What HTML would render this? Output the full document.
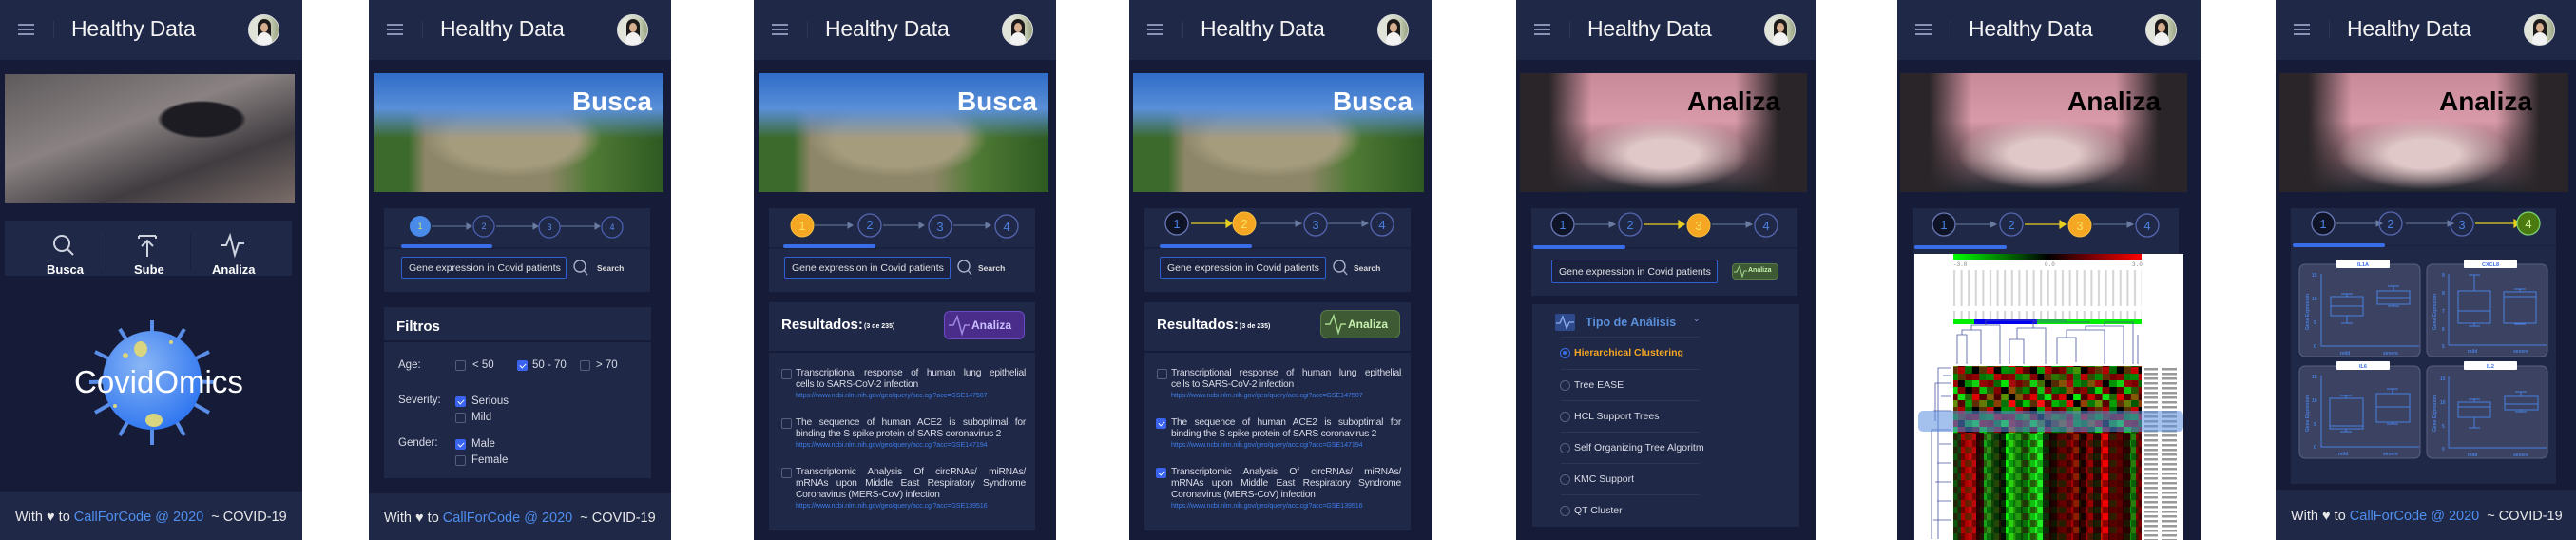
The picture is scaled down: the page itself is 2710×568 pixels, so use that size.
<!DOCTYPE html>
<html><head><meta charset="utf-8">
<style>
*{margin:0;padding:0;box-sizing:border-box}
body{width:2710px;height:568px;background:#fff;position:relative;overflow:hidden;font-family:"Liberation Sans",sans-serif;color:#fff}
.ph{position:absolute;top:0;height:568px;background:#161c38;overflow:hidden}
.a{position:absolute}
.hd{position:absolute;left:0;top:0;width:100%;height:63px;background:#1f2847}
.hb{position:absolute;left:19px;top:25px;width:17px;height:12px;border-top:2px solid #8a93b5;border-bottom:2px solid #8a93b5}
.hb:after{content:"";position:absolute;left:0;top:3px;width:17px;height:2px;background:#8a93b5}
.dv{position:absolute;left:56px;top:22px;width:1px;height:18px;background:#2c3656}
.tt{position:absolute;left:75px;top:17px;font-size:23px;color:#f2f2f2;white-space:nowrap;letter-spacing:-0.2px}
.av{position:absolute;left:261px;top:15px;width:33px;height:33px;border-radius:50%;overflow:hidden;background:linear-gradient(90deg,#dfe3d8 0 30%,#c9d0b8 70%,#9aa585 100%);border:1px solid #ddd}
.av:before{content:"";position:absolute;left:9px;top:4px;width:14px;height:22px;border-radius:7px 7px 3px 3px;background:#1c1a1a}
.av:after{content:"";position:absolute;left:12px;top:8px;width:8px;height:10px;border-radius:50%;background:#d8b090;box-shadow:0 14px 0 4px #f2f2f2}
.card{position:absolute;background:#1f2847}
.ft{position:absolute;left:0;width:100%;background:#1f2847}
.ftx{position:absolute;left:16px;font-size:14.5px;color:#e8e8e8;white-space:nowrap}
.ftx b{color:#4f8ff0;font-weight:normal}
.cb{position:absolute;width:11px;height:11px;border:1.5px solid #555e7e;border-radius:2px}
.cb.on{background:#3a63f0;border-color:#3a63f0}
.cb.on:after{content:"";position:absolute;left:3px;top:1px;width:3px;height:5px;border:solid #fff;border-width:0 1.5px 1.5px 0;transform:rotate(45deg)}
.lb{position:absolute;font-size:11.5px;color:#d8dbe6;white-space:nowrap}
.busca{background:linear-gradient(180deg,#2f6cc8 0%,#5a8fd8 30%,transparent 55%),radial-gradient(ellipse at 48% 55%,#a59c7e 0 30%,transparent 42%),linear-gradient(90deg,#3c6a2c 0 12%,#8e8668 18% 60%,#4f7a35 75%,#2e5a22 100%)}
.anal{background:radial-gradient(ellipse 30% 30% at 50% 68%,#e0c8c8 0 40%,transparent 100%),linear-gradient(90deg,#2a2528 0 10%,transparent 25% 75%,#2a2528 90%),linear-gradient(180deg,#c88a98 0%,#d89aa8 40%,#7a5a62 72%,#20262e 100%)}
.hero1{background:radial-gradient(ellipse at 68% 35%,#1c1c22 0 14%,transparent 16%),linear-gradient(160deg,#5e5a5c 0%,#8a8282 40%,#403c40 70%,#7a6c68 100%)}
.htxt{position:absolute;right:12px;top:14px;font-size:28px;font-weight:bold}
.inp{position:absolute;height:23px;border:1.5px solid #2f5fd0;background:#1a2240;font-size:10.5px;color:#e0e0e0;padding:5px 0 0 7px;white-space:nowrap;overflow:hidden;border-radius:2px}
.it{position:absolute;width:242px;font-size:10.3px;line-height:12px;color:#d8dbe6;letter-spacing:-0.25px}
.it div{white-space:nowrap;text-align:justify;text-align-last:justify}
.it .u{color:#3d7ce8;font-size:7.2px;letter-spacing:-0.1px;line-height:10px}
.it .l{text-align-last:left}
.rd{position:absolute;left:46px;width:11px;height:11px;border:1.5px solid #59617f;border-radius:50%}
.op{position:absolute;left:61px;font-size:10.5px;color:#d8dbe6;white-space:nowrap}
.sp{position:absolute;left:47px;width:146px;height:1px;background:#2c3656}
</style></head><body>

<!-- PHONE 1 -->
<div class="ph" style="left:0;width:318px">
 <div class="hd"></div><div class="hb"></div><div class="dv"></div><div class="tt">Healthy Data</div><div class="av"></div>
 <div class="a hero1" style="left:5px;top:78px;width:305px;height:136px"></div>
 <div class="card" style="left:5px;top:232px;width:302px;height:58px"></div>
 <div class="a" style="left:111px;top:245px;width:1px;height:40px;background:#192140"></div>
 <div class="a" style="left:200px;top:245px;width:1px;height:40px;background:#192140"></div>
 <svg class="a" style="left:0;top:240px" width="318" height="40" fill="none" stroke="#cfd3e0" stroke-width="2">
  <circle cx="65" cy="16" r="8"/><line x1="71" y1="22" x2="77" y2="28"/>
  <line x1="146" y1="8" x2="164" y2="8"/><line x1="146" y1="8" x2="146" y2="11"/><line x1="164" y1="8" x2="164" y2="11"/>
  <line x1="155" y1="13" x2="155" y2="30"/><polyline points="149,19 155,13 161,19"/>
  <polyline points="232,18 238,18 242,8 247,28 251,16 257,16"/>
 </svg>
 <div class="a" style="left:49px;top:276px;font-size:13px;font-weight:bold">Busca</div>
 <div class="a" style="left:141px;top:276px;font-size:13px;font-weight:bold">Sube</div>
 <div class="a" style="left:223px;top:276px;font-size:13px;font-weight:bold">Analiza</div>
 <svg class="a" style="left:60px;top:330px" width="200" height="145">
  <defs><radialGradient id="vg" cx="40%" cy="35%" r="70%"><stop offset="0" stop-color="#8ab6f5"/><stop offset="1" stop-color="#2c74f0"/></radialGradient></defs>
  <g stroke="#5a8de8" stroke-width="4" fill="none">
   <line x1="100" y1="70" x2="100" y2="7"/><line x1="100" y1="70" x2="100" y2="138"/>
   <line x1="100" y1="70" x2="40" y2="40"/><line x1="100" y1="70" x2="160" y2="40"/>
   <line x1="100" y1="70" x2="40" y2="104"/><line x1="100" y1="70" x2="160" y2="104"/>
   <line x1="100" y1="70" x2="66" y2="16"/><line x1="100" y1="70" x2="134" y2="16"/>
   <line x1="100" y1="70" x2="66" y2="128"/><line x1="100" y1="70" x2="134" y2="128"/>
   <line x1="100" y1="70" x2="34" y2="72"/><line x1="100" y1="70" x2="166" y2="72"/>
  </g>
  <circle cx="100" cy="70" r="52" fill="url(#vg)"/>
  <ellipse cx="88" cy="37" rx="7" ry="8" fill="#d8d480"/><ellipse cx="102" cy="112" rx="9" ry="7" fill="#d8d480"/>
  <circle cx="72" cy="44" r="3" fill="#d8d480"/><circle cx="120" cy="30" r="2" fill="#d8d480"/><circle cx="61" cy="97" r="2" fill="#d8d480"/>
 </svg>
 <div class="a" style="left:78px;top:383px;font-size:33px;color:#fff">CovidOmics</div>
 <div class="ft" style="top:517px;height:51px"></div>
 <div class="ftx" style="top:536px">With ♥ to <b>CallForCode @ 2020</b> &nbsp;~ COVID-19</div>
</div>

<!-- PHONE 2 -->
<div class="ph" style="left:388px;width:318px">
 <div class="hd"></div><div class="hb"></div><div class="dv"></div><div class="tt">Healthy Data</div><div class="av"></div>
 <div class="a busca" style="left:5px;top:77px;width:305px;height:125px"><div class="htxt">Busca</div></div>
 <div class="card" style="left:16px;top:219px;width:280px;height:88px"></div>
 <div class="a" style="left:16px;top:260px;width:280px;height:2px;background:#192140"></div>
 <svg class="a" style="left:0;top:226px" width="318" height="26">
  <g stroke="#6a7ba0" stroke-width="1" fill="#6a7ba0">
   <line x1="66" y1="12" x2="103" y2="12"/><polygon points="103,9 108,12 103,15"/>
   <line x1="134" y1="12" x2="173" y2="12"/><polygon points="173,9 178,12 173,15"/>
   <line x1="201" y1="12" x2="238" y2="12"/><polygon points="238,9 243,12 238,15"/>
  </g>
  <circle cx="54" cy="12" r="11" fill="#4a8ae8"/>
  <g fill="none" stroke="#4a5fb0" stroke-width="1.3"><circle cx="121" cy="12" r="11"/><circle cx="190" cy="13" r="11"/><circle cx="256" cy="13" r="11"/></g>
  <g font-size="9" text-anchor="middle" fill="#5a8ae8"><text x="54" y="15" fill="#c8e070">1</text><text x="121" y="15">2</text><text x="190" y="16">3</text><text x="256" y="16">4</text></g>
 </svg>
 <div class="a" style="left:34px;top:257px;width:96px;height:4px;background:#3a6ee8;border-radius:2px"></div>
 <div class="inp" style="left:34px;top:270px;width:174px">Gene expression in Covid patients</div>
 <svg class="a" style="left:214px;top:272px" width="20" height="20" fill="none" stroke="#aab0c8" stroke-width="1.4"><circle cx="8" cy="8" r="6"/><line x1="12" y1="12" x2="16" y2="17"/></svg>
 <div class="a" style="left:240px;top:277px;font-size:8.5px;font-weight:bold;color:#ddd">Search</div>
 <div class="card" style="left:16px;top:323px;width:281px;height:35px"></div>
 <div class="a" style="left:29px;top:335px;font-size:15px;font-weight:bold">Filtros</div>
 <div class="card" style="left:16px;top:360px;width:281px;height:143px"></div>
 <div class="lb" style="left:31px;top:378px">Age:</div>
 <div class="cb" style="left:91px;top:379px"></div><div class="lb" style="left:109px;top:378px">&lt; 50</div>
 <div class="cb on" style="left:156px;top:379px"></div><div class="lb" style="left:172px;top:378px">50 - 70</div>
 <div class="cb" style="left:222px;top:379px"></div><div class="lb" style="left:239px;top:378px">&gt; 70</div>
 <div class="lb" style="left:31px;top:415px">Severity:</div>
 <div class="cb on" style="left:91px;top:417px"></div><div class="lb" style="left:108px;top:416px">Serious</div>
 <div class="cb" style="left:91px;top:434px"></div><div class="lb" style="left:108px;top:433px">Mild</div>
 <div class="lb" style="left:31px;top:460px">Gender:</div>
 <div class="cb on" style="left:91px;top:462px"></div><div class="lb" style="left:108px;top:461px">Male</div>
 <div class="cb" style="left:91px;top:479px"></div><div class="lb" style="left:108px;top:478px">Female</div>
 <div class="ft" style="top:519px;height:49px"></div>
 <div class="ftx" style="top:537px">With ♥ to <b>CallForCode @ 2020</b> &nbsp;~ COVID-19</div>
</div>

<!-- PHONE 3 -->
<div class="ph" style="left:793px;width:318px">
 <div class="hd"></div><div class="hb"></div><div class="dv"></div><div class="tt">Healthy Data</div><div class="av"></div>
 <div class="a busca" style="left:5px;top:77px;width:305px;height:125px"><div class="htxt">Busca</div></div>
 <div class="card" style="left:16px;top:219px;width:280px;height:88px"></div>
 <div class="a" style="left:16px;top:260px;width:280px;height:2px;background:#192140"></div>
 <svg class="a" style="left:0;top:222px" width="318" height="30">
  <g stroke="#6a7ba0" stroke-width="1" fill="#6a7ba0">
   <line x1="64" y1="15" x2="99" y2="15"/><polygon points="99,12 104,15 99,18"/>
   <line x1="136" y1="15" x2="174" y2="15"/><polygon points="174,12 179,15 174,18"/>
   <line x1="210" y1="15" x2="244" y2="15"/><polygon points="244,12 249,15 244,18"/>
  </g>
  <circle cx="51" cy="15" r="12" fill="#f5a623" stroke="#f7c040"/>
  <g fill="none" stroke="#5566b0" stroke-width="1.3"><circle cx="122" cy="15" r="12"/><circle cx="196" cy="16" r="12"/><circle cx="266" cy="16" r="12"/></g>
  <g font-size="13" text-anchor="middle" fill="#4a80e0"><text x="51" y="20" fill="#f8e060">1</text><text x="122" y="19">2</text><text x="196" y="21">3</text><text x="266" y="21">4</text></g>
 </svg>
 <div class="a" style="left:31px;top:257px;width:97px;height:4px;background:#3a6ee8;border-radius:2px"></div>
 <div class="inp" style="left:32px;top:270px;width:175px">Gene expression in Covid patients</div>
 <svg class="a" style="left:213px;top:272px" width="20" height="20" fill="none" stroke="#aab0c8" stroke-width="1.4"><circle cx="8" cy="8" r="6"/><line x1="12" y1="12" x2="16" y2="17"/></svg>
 <div class="a" style="left:236px;top:277px;font-size:8.5px;font-weight:bold;color:#ddd">Search</div>
 <div class="card" style="left:16px;top:318px;width:280px;height:51px"></div>
 <div class="a" style="left:29px;top:333px;font-size:15px;font-weight:bold">Resultados:</div>
 <div class="a" style="left:116px;top:340px;font-size:7px;font-weight:bold">(3 de 235)</div>
 <div class="a" style="left:200px;top:327px;width:85px;height:30px;background:#4a2d8a;border:1.5px solid #6b4bc4;border-radius:6px"></div>
 <svg class="a" style="left:204px;top:330px" width="24" height="24" fill="none" stroke="#a08ae0" stroke-width="1.5"><polyline points="1,12 6,12 10,3 15,21 18,12 23,12"/></svg>
 <div class="a" style="left:229px;top:335px;font-size:12px;font-weight:bold;color:#c8c0ff">Analiza</div>
 <div class="card" style="left:16px;top:371px;width:280px;height:187px"></div>
 <div class="cb" style="left:29px;top:388px"></div>
 <div class="it" style="left:44px;top:387px"><div>Transcriptional response of human lung epithelial</div><div class="l">cells to SARS-CoV-2 infection</div><div class="u l">https://www.ncbi.nlm.nih.gov/geo/query/acc.cgi?acc=GSE147507</div></div>
 <div class="cb" style="left:29px;top:440px"></div>
 <div class="it" style="left:44px;top:439px"><div>The sequence of human ACE2 is suboptimal for</div><div class="l">binding the S spike protein of SARS coronavirus 2</div><div class="u l">https://www.ncbi.nlm.nih.gov/geo/query/acc.cgi?acc=GSE147194</div></div>
 <div class="cb" style="left:29px;top:492px"></div>
 <div class="it" style="left:44px;top:491px"><div>Transcriptomic Analysis Of circRNAs/ miRNAs/</div><div>mRNAs upon Middle East Respiratory Syndrome</div><div class="l">Coronavirus (MERS-CoV) infection</div><div class="u l">https://www.ncbi.nlm.nih.gov/geo/query/acc.cgi?acc=GSE139516</div></div>
</div>

<!-- PHONE 4 -->
<div class="ph" style="left:1188px;width:319px">
 <div class="hd"></div><div class="hb"></div><div class="dv"></div><div class="tt">Healthy Data</div><div class="av"></div>
 <div class="a busca" style="left:4px;top:77px;width:306px;height:125px"><div class="htxt">Busca</div></div>
 <div class="card" style="left:16px;top:219px;width:280px;height:88px"></div>
 <div class="a" style="left:16px;top:260px;width:280px;height:2px;background:#192140"></div>
 <svg class="a" style="left:0;top:222px" width="319" height="30">
  <g stroke="#6a7ba0" stroke-width="1" fill="#6a7ba0">
   <line x1="138" y1="13" x2="175" y2="13"/><polygon points="175,10 181,13 175,16"/>
   <line x1="209" y1="13" x2="245" y2="13"/><polygon points="245,10 251,13 245,16"/>
  </g>
  <g stroke="#e8d020" stroke-width="1.2" fill="#e8d020"><line x1="65" y1="13" x2="102" y2="13"/><polygon points="102,9 108,13 102,17"/></g>
  <circle cx="50" cy="13" r="12" fill="#0e1326" stroke="#6a78b8" stroke-width="1.3"/>
  <circle cx="121" cy="13" r="12" fill="#f5a623" stroke="#f7c040"/>
  <g fill="none" stroke="#5566b0" stroke-width="1.3"><circle cx="196" cy="14" r="12"/><circle cx="266" cy="14" r="12"/></g>
  <g font-size="13" text-anchor="middle" fill="#4a80e0"><text x="50" y="18">1</text><text x="121" y="18" fill="#f8e060">2</text><text x="196" y="19">3</text><text x="266" y="19">4</text></g>
 </svg>
 <div class="a" style="left:32px;top:257px;width:97px;height:4px;background:#3a6ee8;border-radius:2px"></div>
 <div class="inp" style="left:32px;top:270px;width:175px">Gene expression in Covid patients</div>
 <svg class="a" style="left:213px;top:272px" width="20" height="20" fill="none" stroke="#aab0c8" stroke-width="1.4"><circle cx="8" cy="8" r="6"/><line x1="12" y1="12" x2="16" y2="17"/></svg>
 <div class="a" style="left:236px;top:277px;font-size:8.5px;font-weight:bold;color:#ddd">Search</div>
 <div class="card" style="left:16px;top:318px;width:280px;height:51px"></div>
 <div class="a" style="left:29px;top:333px;font-size:15px;font-weight:bold">Resultados:</div>
 <div class="a" style="left:116px;top:340px;font-size:7px;font-weight:bold">(3 de 235)</div>
 <div class="a" style="left:201px;top:326px;width:84px;height:30px;background:#3d5a35;border:1.5px solid #5a7a4a;border-radius:7px"></div>
 <svg class="a" style="left:205px;top:329px" width="24" height="24" fill="none" stroke="#a8d890" stroke-width="1.5"><polyline points="1,12 6,12 10,3 15,21 18,12 23,12"/></svg>
 <div class="a" style="left:230px;top:334px;font-size:12px;font-weight:bold;color:#c8f0b0">Analiza</div>
 <div class="card" style="left:16px;top:371px;width:280px;height:187px"></div>
 <div class="cb" style="left:29px;top:388px"></div>
 <div class="it" style="left:44px;top:387px"><div>Transcriptional response of human lung epithelial</div><div class="l">cells to SARS-CoV-2 infection</div><div class="u l">https://www.ncbi.nlm.nih.gov/geo/query/acc.cgi?acc=GSE147507</div></div>
 <div class="cb on" style="left:28px;top:440px"></div>
 <div class="it" style="left:44px;top:439px"><div>The sequence of human ACE2 is suboptimal for</div><div class="l">binding the S spike protein of SARS coronavirus 2</div><div class="u l">https://www.ncbi.nlm.nih.gov/geo/query/acc.cgi?acc=GSE147194</div></div>
 <div class="cb on" style="left:28px;top:492px"></div>
 <div class="it" style="left:44px;top:491px"><div>Transcriptomic Analysis Of circRNAs/ miRNAs/</div><div>mRNAs upon Middle East Respiratory Syndrome</div><div class="l">Coronavirus (MERS-CoV) infection</div><div class="u l">https://www.ncbi.nlm.nih.gov/geo/query/acc.cgi?acc=GSE139516</div></div>
</div>

<!-- PHONE 5 -->
<div class="ph" style="left:1595px;width:315px">
 <div class="hd"></div><div class="hb"></div><div class="dv"></div><div class="tt">Healthy Data</div><div class="av"></div>
 <div class="a anal" style="left:4px;top:77px;width:302px;height:125px"><div class="htxt" style="color:#000;right:28px">Analiza</div></div>
 <div class="card" style="left:16px;top:219px;width:280px;height:92px"></div>
 <div class="a" style="left:16px;top:260px;width:280px;height:2px;background:#192140"></div>
 <svg class="a" style="left:0;top:222px" width="315" height="30">
  <g stroke="#6a7ba0" stroke-width="1" fill="#6a7ba0">
   <line x1="62" y1="14" x2="98" y2="14"/><polygon points="98,11 104,14 98,17"/>
   <line x1="206" y1="14" x2="242" y2="14"/><polygon points="242,11 248,14 242,17"/>
  </g>
  <g stroke="#e8d020" stroke-width="1.2" fill="#e8d020"><line x1="134" y1="14" x2="171" y2="14"/><polygon points="171,10 177,14 171,18"/></g>
  <circle cx="49" cy="14" r="12" fill="#0e1326" stroke="#6a78b8" stroke-width="1.3"/>
  <circle cx="120" cy="14" r="12" fill="none" stroke="#5566b0" stroke-width="1.3"/>
  <circle cx="192" cy="15" r="12" fill="#f5a623" stroke="#f7c040"/>
  <circle cx="263" cy="15" r="12" fill="none" stroke="#5566b0" stroke-width="1.3"/>
  <g font-size="13" text-anchor="middle" fill="#4a80e0"><text x="49" y="19">1</text><text x="120" y="19">2</text><text x="192" y="20" fill="#f8e060">3</text><text x="263" y="20">4</text></g>
 </svg>
 <div class="a" style="left:18px;top:258px;width:97px;height:4px;background:#3a6ee8;border-radius:2px"></div>
 <div class="inp" style="left:37px;top:273px;width:175px;height:25px;padding-top:6px">Gene expression in Covid patients</div>
 <div class="a" style="left:227px;top:277px;width:49px;height:17px;background:#3d5a35;border:1px solid #5a7a4a;border-radius:4px"></div>
 <svg class="a" style="left:229px;top:278px" width="14" height="14" fill="none" stroke="#a8d890" stroke-width="1"><polyline points="0,8 3,8 6,2 9,13 11,7 14,7"/></svg>
 <div class="a" style="left:244px;top:281px;font-size:7px;font-weight:bold;color:#c8f0b0">Analiza</div>
 <div class="card" style="left:17px;top:320px;width:281px;height:234px"></div>
 <div class="a" style="left:41px;top:330px;width:21px;height:18px;background:#2e4a8c;border-radius:2px"></div>
 <svg class="a" style="left:41px;top:330px" width="21" height="18" fill="none" stroke="#8ab0f0" stroke-width="1.3"><polyline points="1,10 5,10 8,3 12,15 15,9 20,9"/></svg>
 <div class="a" style="left:73px;top:332px;font-size:12.5px;font-weight:bold;color:#5b8fd9">Tipo de Análisis</div>
 <div class="a" style="left:186px;top:330px;font-size:9px;color:#8a9ad0">⌄</div>
 <div class="sp" style="top:354px"></div>
 <div class="rd" style="top:366px;border-color:#3a6ee8"><div class="a" style="left:2px;top:2px;width:4px;height:4px;border-radius:50%;background:#3a6ee8"></div></div>
 <div class="op" style="top:365px;color:#f5a623;font-weight:bold">Hierarchical Clustering</div>
 <div class="sp" style="top:388px"></div>
 <div class="rd" style="top:400px"></div><div class="op" style="top:399px">Tree EASE</div>
 <div class="sp" style="top:421px"></div>
 <div class="rd" style="top:433px"></div><div class="op" style="top:432px">HCL Support Trees</div>
 <div class="sp" style="top:454px"></div>
 <div class="rd" style="top:466px"></div><div class="op" style="top:465px">Self Organizing Tree Algoritm</div>
 <div class="sp" style="top:487px"></div>
 <div class="rd" style="top:499px"></div><div class="op" style="top:498px">KMC Support</div>
 <div class="sp" style="top:520px"></div>
 <div class="rd" style="top:532px"></div><div class="op" style="top:531px">QT Cluster</div>
</div>

<!-- PHONE 6 -->
<div class="ph" style="left:1996px;width:319px">
 <div class="hd"></div><div class="hb"></div><div class="dv"></div><div class="tt">Healthy Data</div><div class="av"></div>
 <div class="a anal" style="left:3px;top:77px;width:302px;height:125px"><div class="htxt" style="color:#000;right:28px">Analiza</div></div>
 <div class="card" style="left:16px;top:219px;width:280px;height:349px"></div>
 <svg class="a" style="left:0;top:222px" width="319" height="30">
  <g stroke="#6a7ba0" stroke-width="1" fill="#6a7ba0">
   <line x1="62" y1="14" x2="98" y2="14"/><polygon points="98,11 104,14 98,17"/>
   <line x1="206" y1="14" x2="242" y2="14"/><polygon points="242,11 248,14 242,17"/>
  </g>
  <g stroke="#e8d020" stroke-width="1.2" fill="#e8d020"><line x1="134" y1="14" x2="171" y2="14"/><polygon points="171,10 177,14 171,18"/></g>
  <circle cx="49" cy="14" r="12" fill="#0e1326" stroke="#6a78b8" stroke-width="1.3"/>
  <circle cx="120" cy="14" r="12" fill="none" stroke="#5566b0" stroke-width="1.3"/>
  <circle cx="192" cy="15" r="12" fill="#f5a623" stroke="#f7c040"/>
  <circle cx="263" cy="15" r="12" fill="none" stroke="#5566b0" stroke-width="1.3"/>
  <g font-size="13" text-anchor="middle" fill="#4a80e0"><text x="49" y="19">1</text><text x="120" y="19">2</text><text x="192" y="20" fill="#f8e060">3</text><text x="263" y="20">4</text></g>
 </svg>
 <div class="a" style="left:18px;top:258px;width:97px;height:4px;background:#3a6ee8;border-radius:2px"></div>
 <svg class="a" style="left:18px;top:267px" width="283" height="301">
  <defs>
   <linearGradient id="cbar"><stop offset="0" stop-color="#00ff00"/><stop offset=".5" stop-color="#000"/><stop offset="1" stop-color="#ff0000"/></linearGradient>
   <pattern id="pA" width="30.4" height="21" patternUnits="userSpaceOnUse">
    <rect width="7.6" height="7" fill="#e00000"/><rect x="7.6" width="7.6" height="7" fill="#000"/><rect x="15.2" width="7.6" height="7" fill="#10e010"/><rect x="22.8" width="7.6" height="7" fill="#700000"/>
    <rect y="7" width="7.6" height="7" fill="#10d010"/><rect x="7.6" y="7" width="7.6" height="7" fill="#ff1010"/><rect x="15.2" y="7" width="7.6" height="7" fill="#000"/><rect x="22.8" y="7" width="7.6" height="7" fill="#08a008"/>
    <rect y="14" width="7.6" height="7" fill="#000"/><rect x="7.6" y="14" width="7.6" height="7" fill="#10c010"/><rect x="15.2" y="14" width="7.6" height="7" fill="#b00000"/><rect x="22.8" y="14" width="7.6" height="7" fill="#000"/>
   </pattern>
   <pattern id="pB" width="38" height="14" patternUnits="userSpaceOnUse">
    <rect width="7.6" height="7" fill="#00e000"/><rect x="7.6" width="7.6" height="7" fill="#e00000"/><rect x="22.8" width="7.6" height="7" fill="#f00000"/><rect x="30.4" width="7.6" height="7" fill="#00c000"/>
    <rect y="7" width="7.6" height="7" fill="#d00000"/><rect x="15.2" y="7" width="7.6" height="7" fill="#00f000"/><rect x="30.4" y="7" width="7.6" height="7" fill="#c00000"/>
   </pattern>
   <pattern id="pN" width="15.2" height="14" patternUnits="userSpaceOnUse">
    <rect width="7.6" height="7" fill="#000" opacity=".45"/><rect x="7.6" y="7" width="7.6" height="7" fill="#000" opacity=".35"/>
   </pattern>
   <pattern id="lbl" width="7.6" height="60" patternUnits="userSpaceOnUse"><rect x="3" width="2" height="55" fill="#b8b8b8"/></pattern>
   <pattern id="rl" width="20" height="5" patternUnits="userSpaceOnUse"><rect width="16" height="2.5" fill="#555"/></pattern>
  </defs>
  <rect width="283" height="301" fill="#fff"/>
  <rect x="41" y="0" width="198" height="6" fill="url(#cbar)"/>
  <g font-size="6" fill="#888" font-family="Liberation Mono"><text x="41" y="13">-3.0</text><text x="137" y="13">0.0</text><text x="229" y="13">3.0</text></g>
  <rect x="41" y="17" width="198" height="52" fill="url(#lbl)" opacity=".6"/>
  <rect x="41" y="69" width="22" height="5" fill="#00ee00"/><rect x="63" y="69" width="66" height="5" fill="#0000ee"/><rect x="129" y="69" width="110" height="5" fill="#00ee00"/>
  <g stroke="#4a55a0" stroke-width=".8" fill="none">
   <path d="M45 116V85h10v31M50 85V80h20v36M60 80V75h30M90 75v41M75 75V70h85M100 116V90h15v26M108 90V78h30v38M125 78V72h60M150 116V88h20v26M160 88V80h40v36M180 80V76h40v40M200 76V72h30v44M235 116V85"/>
   <path d="M39 120H25v180M39 128H30M39 136H22v40M39 150H28M39 165H20M39 185H18v115M39 200H26M39 220H24M39 240H22M39 260H24M39 280H20"/>
  </g>
  <rect x="41" y="118" width="198" height="70" fill="url(#pA)"/>
  <rect x="41" y="118" width="198" height="70" fill="url(#pB)" opacity=".55"/>
  <rect x="41" y="118" width="198" height="70" fill="url(#pN)"/>
  <g>
   <rect x="41" y="188" width="8" height="113" fill="#104010"/><rect x="49" y="188" width="8" height="113" fill="#b00000"/><rect x="57" y="188" width="8" height="113" fill="#c00808"/>
   <rect x="65" y="188" width="8" height="113" fill="#200000"/><rect x="73" y="188" width="8" height="113" fill="#18a018"/><rect x="81" y="188" width="8" height="113" fill="#0a500a"/>
   <rect x="89" y="188" width="7" height="113" fill="#051a05"/><rect x="96" y="188" width="8" height="113" fill="#10f010"/><rect x="104" y="188" width="8" height="113" fill="#10b010"/>
   <rect x="112" y="188" width="7" height="113" fill="#0a600a"/><rect x="119" y="188" width="8" height="113" fill="#10c010"/><rect x="127" y="188" width="8" height="113" fill="#20f020"/>
   <rect x="135" y="188" width="7" height="113" fill="#0a300a"/><rect x="142" y="188" width="8" height="113" fill="#100000"/><rect x="150" y="188" width="8" height="113" fill="#500000"/>
   <rect x="158" y="188" width="7" height="113" fill="#600000"/><rect x="165" y="188" width="8" height="113" fill="#a00000"/><rect x="173" y="188" width="8" height="113" fill="#200000"/>
   <rect x="181" y="188" width="7" height="113" fill="#900000"/><rect x="188" y="188" width="8" height="113" fill="#200404"/><rect x="196" y="188" width="8" height="113" fill="#f00000"/>
   <rect x="204" y="188" width="7" height="113" fill="#500000"/><rect x="211" y="188" width="8" height="113" fill="#600000"/><rect x="219" y="188" width="8" height="113" fill="#200000"/>
   <rect x="227" y="188" width="6" height="113" fill="#109010"/><rect x="233" y="188" width="6" height="113" fill="#700000"/>
  </g>
  <rect x="41" y="188" width="198" height="113" fill="url(#pN)"/>
  <rect x="41" y="118" width="198" height="183" fill="url(#pB)" opacity=".12"/>
  <rect x="242" y="118" width="36" height="183" fill="url(#rl)" opacity=".6"/>
  <rect x="4" y="165" width="279" height="22" rx="5" fill="#5a8ee0" opacity=".55"/>
 </svg>
</div>

<!-- PHONE 7 -->
<div class="ph" style="left:2394px;width:316px">
 <div class="hd"></div><div class="hb"></div><div class="dv"></div><div class="tt">Healthy Data</div><div class="av"></div>
 <div class="a anal" style="left:4px;top:77px;width:304px;height:125px"><div class="htxt" style="color:#000;right:38px">Analiza</div></div>
 <div class="card" style="left:16px;top:219px;width:279px;height:290px"></div>
 <div class="a" style="left:16px;top:258px;width:279px;height:1px;background:#192140"></div>
 <svg class="a" style="left:0;top:222px" width="316" height="30">
  <g stroke="#6a7ba0" stroke-width="1" fill="#6a7ba0">
   <line x1="64" y1="13" x2="106" y2="13"/><polygon points="106,10 112,13 106,16"/>
   <line x1="137" y1="13" x2="181" y2="13"/><polygon points="181,10 187,13 181,16"/>
  </g>
  <g stroke="#e8d020" stroke-width="1.2" fill="#e8d020"><line x1="210" y1="13" x2="251" y2="13"/><polygon points="251,9 257,13 251,17"/></g>
  <circle cx="50" cy="13" r="12" fill="#0e1326" stroke="#6a78b8" stroke-width="1.3"/>
  <circle cx="121" cy="13" r="12" fill="none" stroke="#5566b0" stroke-width="1.3"/>
  <circle cx="196" cy="14" r="12" fill="none" stroke="#5566b0" stroke-width="1.3"/>
  <circle cx="266" cy="13" r="12" fill="#4a7a10" stroke="#7ad070" stroke-width="1.3"/>
  <g font-size="13" text-anchor="middle" fill="#4a80e0"><text x="50" y="18">1</text><text x="121" y="18">2</text><text x="196" y="19">3</text><text x="266" y="18" fill="#d0f0a0">4</text></g>
 </svg>
 <div class="a" style="left:18px;top:256px;width:97px;height:4px;background:#3a6ee8;border-radius:2px"></div>
 <svg class="a" style="left:0;top:270px" width="316" height="240" font-family="Liberation Sans" font-weight="bold">
  <g fill="#3b4262" stroke="#5a6282" stroke-width="1">
   <rect x="25" y="8" width="127" height="97" rx="6"/><rect x="159" y="8" width="127" height="97" rx="6"/>
   <rect x="25" y="115" width="127" height="97" rx="6"/><rect x="159" y="115" width="127" height="97" rx="6"/>
  </g>
  <g fill="#fff"><rect x="64" y="3" width="56" height="9" rx="1"/><rect x="198" y="3" width="56" height="9" rx="1"/><rect x="64" y="110" width="56" height="9" rx="1"/><rect x="198" y="110" width="56" height="9" rx="1"/></g>
  <g font-size="5.5" fill="#3a6ee8" text-anchor="middle"><text x="92" y="10">IL1A</text><text x="226" y="10">CXCL8</text><text x="92" y="117">IL6</text><text x="226" y="117">IL2</text></g>
  <g fill="none" stroke="#4a80e0" stroke-width="1">
   <path d="M48 18V94h103M182 18V93h103M48 125V200h103M182 126V201h103"/>
   <rect x="58" y="42" width="34" height="20"/><line x1="58" y1="52" x2="92" y2="52"/><path d="M75 42v-3M69 39h12M75 62v8M69 70h12"/>
   <rect x="107" y="36" width="34" height="14"/><line x1="107" y1="43" x2="141" y2="43"/><path d="M124 36v-5M118 31h12M124 50v2M118 52h12"/>
   <rect x="192" y="36" width="34" height="34"/><line x1="192" y1="57" x2="226" y2="57"/><path d="M209 36v-17M203 19h12M209 70v3M203 73h12"/>
   <rect x="240" y="37" width="34" height="33"/><line x1="240" y1="42" x2="274" y2="42"/><path d="M257 37v-3M251 34h12M257 70v1M251 71h12"/>
   <rect x="57" y="149" width="35" height="32"/><line x1="57" y1="178" x2="92" y2="178"/><path d="M74 149v-3M68 146h12M74 181v3M68 184h12"/>
   <rect x="106" y="144" width="35" height="30"/><line x1="106" y1="158" x2="141" y2="158"/><path d="M123 144v-5M117 139h12M123 174v2M117 176h12"/>
   <rect x="192" y="153" width="34" height="16"/><line x1="192" y1="158" x2="226" y2="158"/><path d="M209 153v-3M203 150h12M209 169v11M203 180h12"/>
   <rect x="241" y="147" width="35" height="14"/><line x1="241" y1="155" x2="276" y2="155"/><path d="M258 147v-5M252 142h12M258 161v2M252 163h12"/>
  </g>
  <g font-size="5" fill="#4a80e0">
   <text x="38" y="21">15</text><text x="38" y="46">10</text><text x="40" y="71">5</text><text x="40" y="96">0</text>
   <text x="175" y="21">9</text><text x="175" y="40">8</text><text x="175" y="59">7</text><text x="175" y="78">6</text><text x="175" y="96">5</text>
   <text x="38" y="128">15</text><text x="38" y="153">10</text><text x="40" y="178">5</text><text x="40" y="202">0</text>
   <text x="173" y="130">15</text><text x="173" y="155">10</text><text x="175" y="180">5</text><text x="175" y="204">0</text>
   <text x="68" y="103">mild</text><text x="113" y="103">severe</text><text x="202" y="101">mild</text><text x="250" y="101">severe</text>
   <text x="66" y="209">mild</text><text x="113" y="209">severe</text><text x="202" y="210">mild</text><text x="250" y="210">severe</text>
   <text transform="translate(35,77) rotate(-90)">Gene Expresion</text><text transform="translate(169,77) rotate(-90)">Gene Expresion</text>
   <text transform="translate(35,184) rotate(-90)">Gene Expresion</text><text transform="translate(169,184) rotate(-90)">Gene Expresion</text>
  </g>
 </svg>
 <div class="ft" style="top:515px;height:53px"></div>
 <div class="ftx" style="top:535px;left:16px">With ♥ to <b>CallForCode @ 2020</b> &nbsp;~ COVID-19</div>
</div>

</body></html>
